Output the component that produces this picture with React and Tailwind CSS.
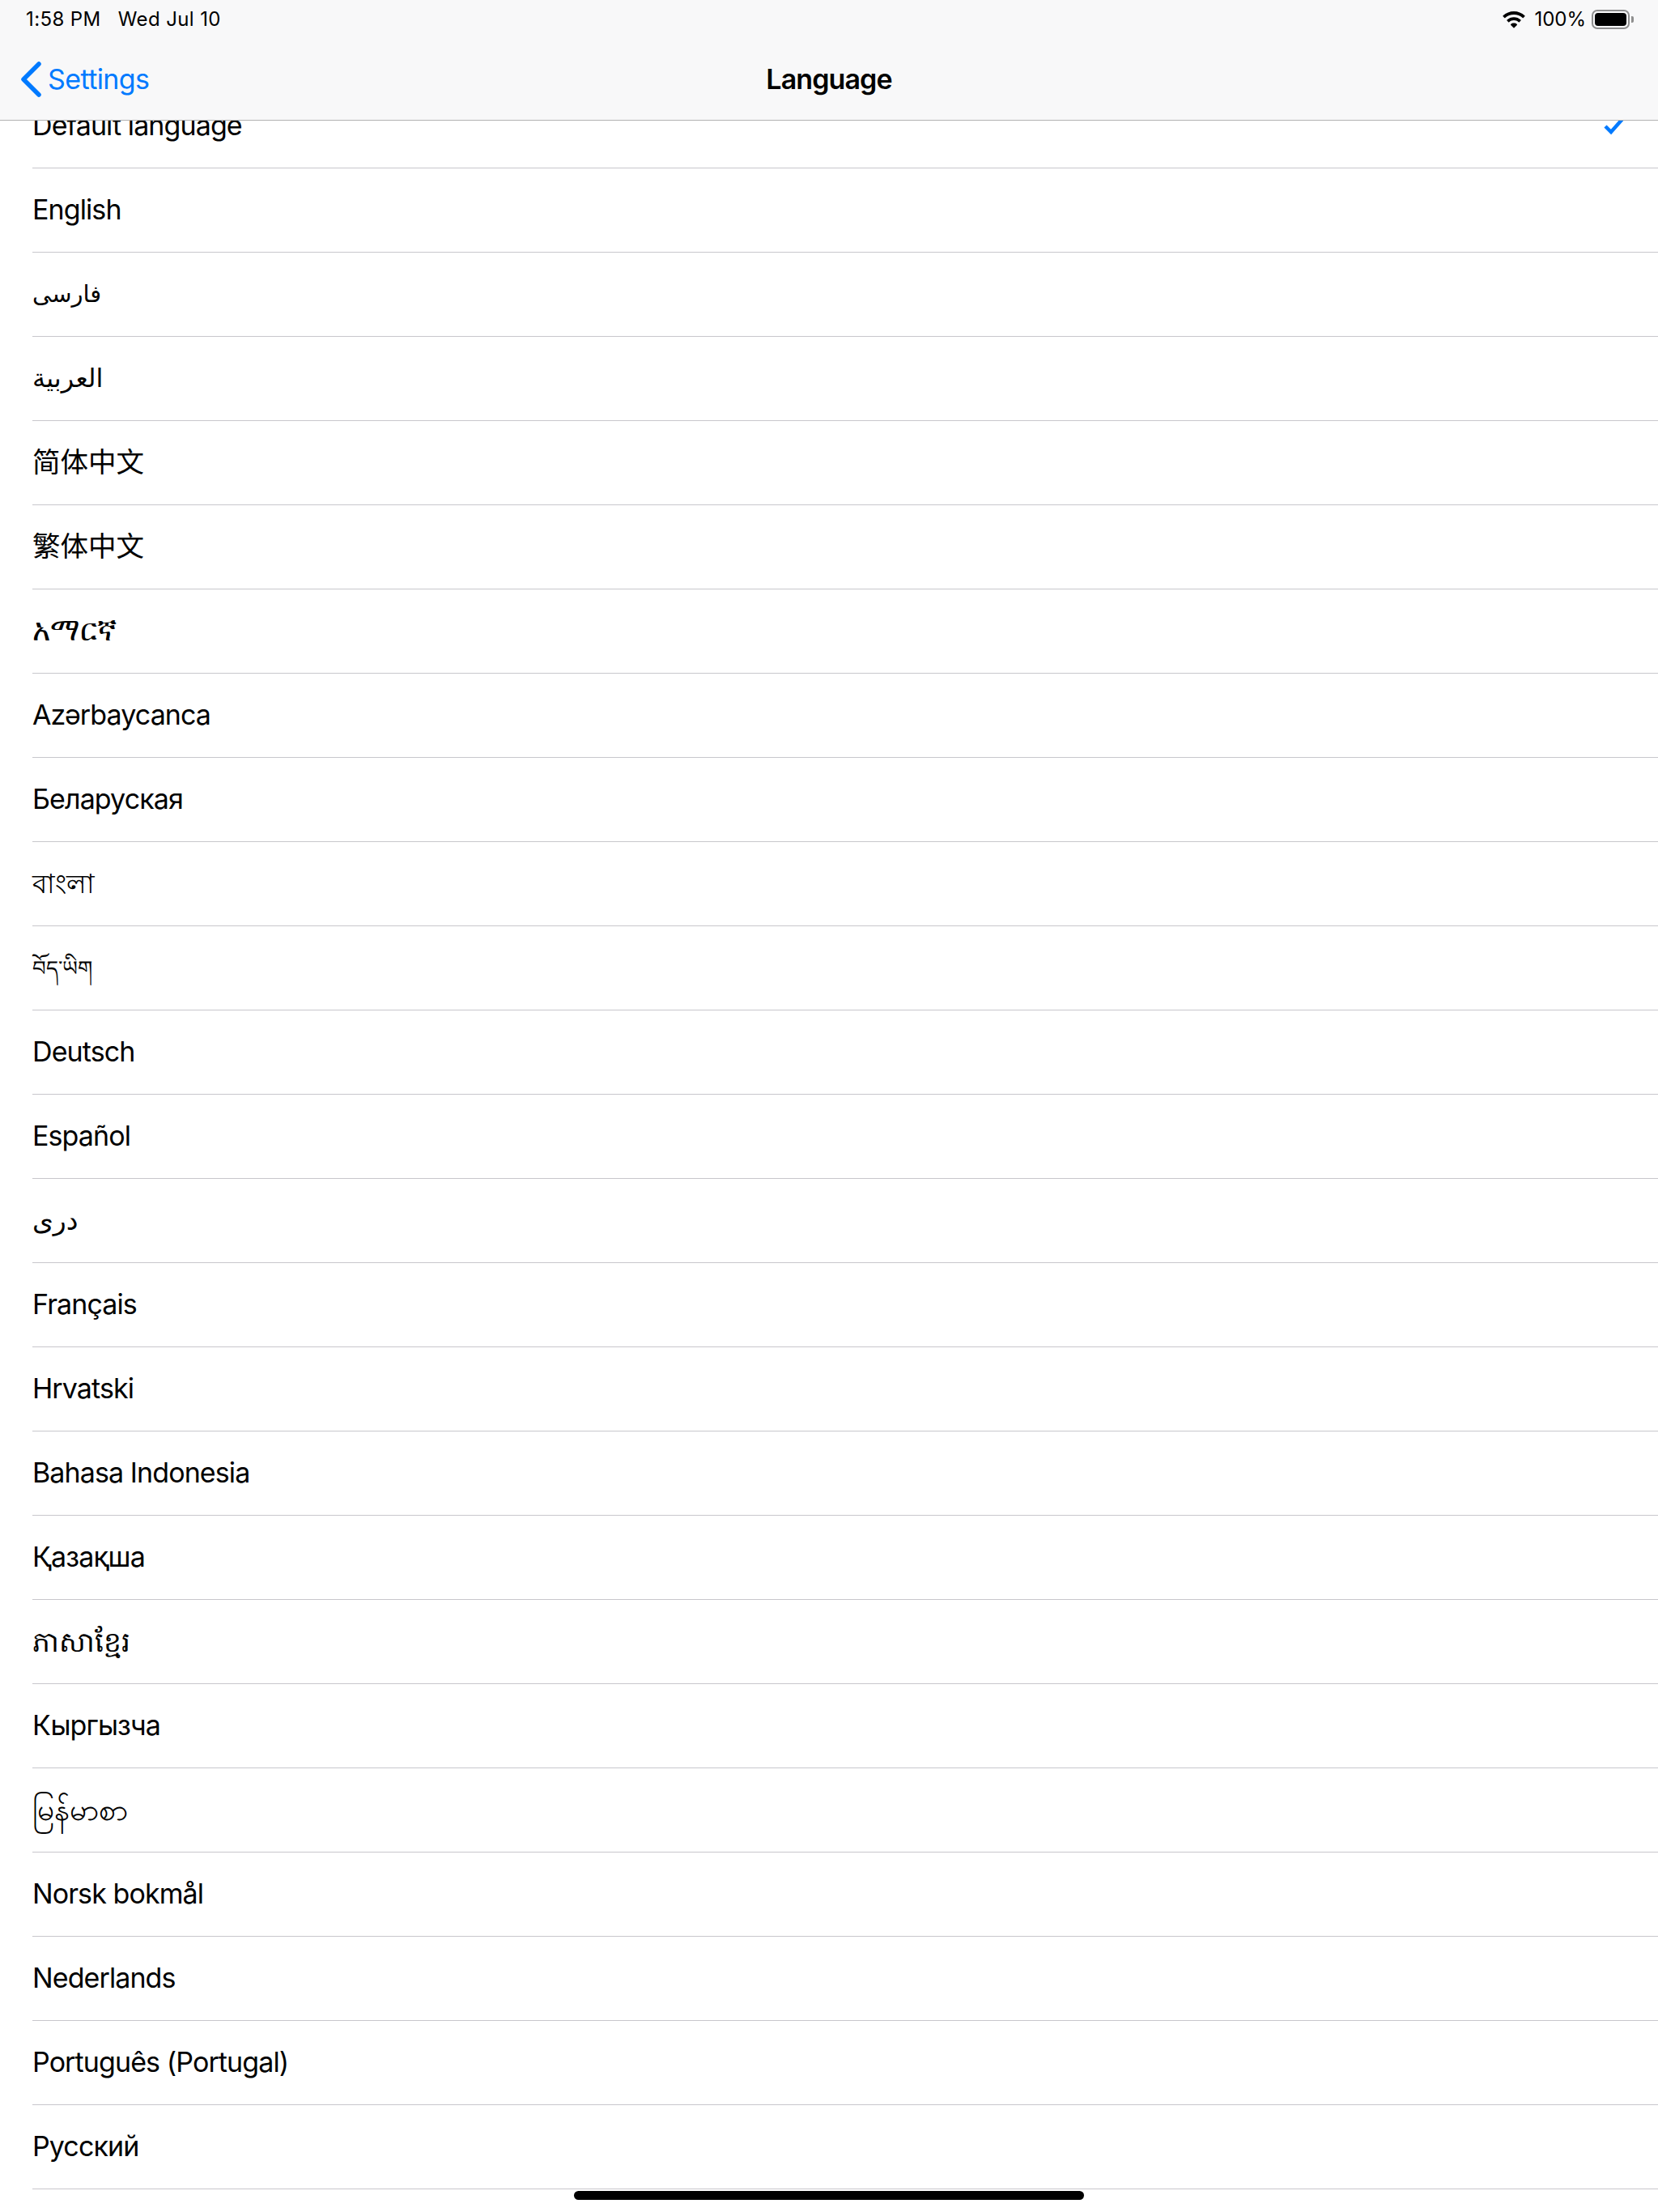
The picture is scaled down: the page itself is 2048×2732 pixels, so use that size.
const latin = "text-[34px] tracking-[-0.9px] pb-[2px]";

const languages = [
  { name: "English", style: latin },
  { name: "فارسی", style: "text-[29px] pb-[2px]" },
  { name: "العربية", style: "text-[32px] pb-[2px]" },
  { name: "简体中文", style: "text-[34.5px] pb-[1px]" },
  { name: "繁体中文", style: "text-[34.5px] pb-[1px]" },
  { name: "አማርኛ", style: "text-[37.5px] pb-[2px]" },
  { name: "Azərbaycanca", style: latin },
  { name: "Беларуская", style: latin },
  { name: "বাংলা", style: "text-[33px]" },
  { name: "བོད་ཡིག", style: "text-[26px]" },
  { name: "Deutsch", style: latin },
  { name: "Español", style: latin },
  { name: "دری", style: "text-[33px]" },
  { name: "Français", style: latin },
  { name: "Hrvatski", style: latin },
  { name: "Bahasa Indonesia", style: latin },
  { name: "Қазақша", style: latin },
  { name: "ភាសាខ្មែរ", style: "text-[34.5px]" },
  { name: "Кыргызча", style: latin },
  { name: "မြန်မာစာ", style: "text-[37px] pb-[2px]" },
  { name: "Norsk bokmål", style: latin },
  { name: "Nederlands", style: latin },
  { name: "Português (Portugal)", style: latin },
  { name: "Русский", style: latin },
];

function Wifi() {
  return (
    <svg width="28" height="21" viewBox="0 0 28 21" className="text-black">
      <path
        fill="currentColor"
        d="M14 0C8.9 0 4.2 2 .6 5.3c-.3.3-.3.7 0 1l1.7 1.7c.3.3.7.3 1 0C6.100 5.400 9.900 3.900 14 3.900s7.900 1.500 10.700 4.100c.3.3.7.3 1 0l1.700-1.700c.3-.3.3-.7 0-1C23.800 2 19.100 0 14 0zm0 7.200c-3.200 0-6.200 1.200-8.500 3.300-.3.3-.3.7 0 1l1.700 1.700c.3.3.7.3 1 0 1.600-1.400 3.600-2.200 5.800-2.200s4.200.8 5.800 2.200c.3.3.7.3 1 0l1.700-1.700c.3-.3.3-.7 0-1C20.200 8.400 17.200 7.200 14 7.200zm0 7.300c-1.500 0-2.800.5-3.800 1.400-.3.3-.3.700 0 1l3.300 3.400c.3.3.7.3 1 0l3.300-3.400c.3-.3.3-.7 0-1-1-.9-2.300-1.400-3.800-1.400z"
      />
    </svg>
  );
}

function Battery() {
  return (
    <div className="flex items-center">
      <div className="w-[47px] h-[24px] rounded-[7px] border-2 border-[#8e8e8e] p-[2px]">
        <div className="w-full h-full rounded-[4px] bg-black"></div>
      </div>
      <div className="ml-[2px] w-[3px] h-[8px] rounded-r-[2px] bg-[#8e8e8e]"></div>
    </div>
  );
}

export default function App() {
  return (
    <div
      className="relative w-[2048px] h-[2732px] overflow-hidden bg-white text-black"
      style={{ fontFamily: 'Inter, "Noto Sans", "DejaVu Sans", "Noto Sans CJK SC", sans-serif' }}
    >
      <header className="relative z-10 h-[149px] bg-[#f8f8f9] border-b border-[#b2b2b2]">
        <div className="flex justify-between items-center h-[48px] pl-[32px] pr-[30px] text-[24px] leading-none tracking-[0.4px]">
          <div className="flex gap-[21px]">
            <span>1:58 PM</span>
            <span>Wed Jul 10</span>
          </div>
          <div className="flex items-center">
            <Wifi />
            <span className="ml-[11px] mr-[7px] tracking-normal">100%</span>
            <Battery />
          </div>
        </div>
        <div className="relative flex items-center h-[100px]">
          <div className="flex items-center pl-[25px] text-[#007aff]">
            <svg width="26" height="44" viewBox="0 0 26 44" fill="none">
              <path d="M23 3 L4 22 L23 41" stroke="currentColor" strokeWidth="5.500" strokeLinecap="round" strokeLinejoin="round" />
            </svg>
            <span className="ml-[8px] text-[34px] leading-none tracking-[-0.6px]">Settings</span>
          </div>
          <div className="absolute inset-x-0 text-center text-[34px] leading-none font-semibold tracking-[-0.9px]">Language</div>
        </div>
      </header>

      <ul className="-mt-[45px]">
        <li className="flex items-center justify-between h-[104px] ml-[40px] pr-[40px] pb-[2px] border-b border-[#c8c7cc] text-[34px] tracking-[-0.9px]">
          <span>Default language</span>
          <svg width="28" height="26" viewBox="0 0 28 26" fill="none" className="text-[#007aff]">
            <path d="M3 14 L10 21 L25 4" stroke="currentColor" strokeWidth="4.500" />
          </svg>
        </li>
        {languages.map((lang) => (
          <li key={lang.name} className={"flex items-center h-[104px] ml-[40px] border-b border-[#c8c7cc] " + lang.style}>
            {lang.name}
          </li>
        ))}
      </ul>

      <div className="absolute left-[709px] top-[2706px] w-[630px] h-[11px] rounded-full bg-black"></div>
    </div>
  );
}
